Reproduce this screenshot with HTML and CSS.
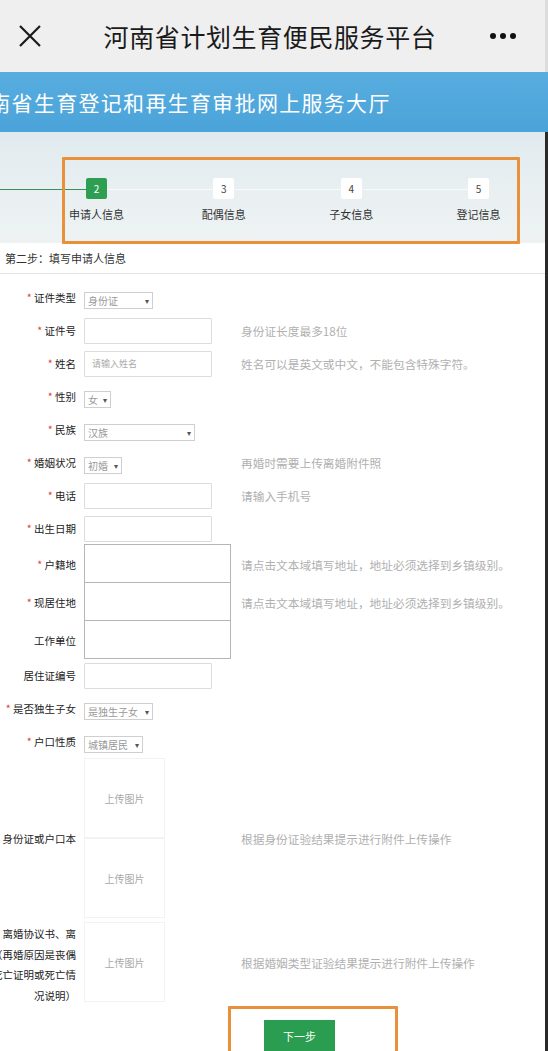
FILE: index.html
```html
<!DOCTYPE html>
<html lang="zh-CN">
<head>
<meta charset="utf-8">
<title>河南省计划生育便民服务平台</title>
<link rel="stylesheet" href="styles.css">
</head>
<body>
<header class="topbar">
  <svg class="close" width="24" height="24" viewBox="0 0 24 24"><path d="M2 2 L22 22 M22 2 L2 22" stroke="#1a1a1a" stroke-width="2.2" fill="none"/></svg>
  <h1>河南省计划生育便民服务平台</h1>
  <span class="more"><i></i><i></i><i></i></span>
</header>
<div class="banner"><span>河南省生育登记和再生育审批网上服务大厅</span></div>
<div class="steps-area">
  <div class="track">
    <div class="line done"></div>
    <div class="step active"><b>2</b><span>申请人信息</span></div>
    <div class="line"></div>
    <div class="step"><b>3</b><span>配偶信息</span></div>
    <div class="line"></div>
    <div class="step"><b>4</b><span>子女信息</span></div>
    <div class="line"></div>
    <div class="step"><b>5</b><span>登记信息</span></div>
  </div>
  <div class="mark mark-steps"></div>
</div>
<main class="content">
  <div class="section-title">第二步：填写申请人信息</div>
  <div class="form">
    <div class="row"><label class="req">证件类型</label><div><span class="select w69">身份证</span></div><span class="hint"></span></div>
    <div class="row"><label class="req">证件号</label><div><span class="input"></span></div><span class="hint">身份证长度最多18位</span></div>
    <div class="row"><label class="req">姓名</label><div><span class="input ph">请输入姓名</span></div><span class="hint">姓名可以是英文或中文，不能包含特殊字符。</span></div>
    <div class="row"><label class="req">性别</label><div><span class="select w27">女</span></div><span class="hint"></span></div>
    <div class="row"><label class="req">民族</label><div><span class="select w111">汉族</span></div><span class="hint"></span></div>
    <div class="row"><label class="req">婚姻状况</label><div><span class="select w38">初婚</span></div><span class="hint">再婚时需要上传离婚附件照</span></div>
    <div class="row"><label class="req">电话</label><div><span class="input"></span></div><span class="hint">请输入手机号</span></div>
    <div class="row"><label class="req">出生日期</label><div><span class="input"></span></div><span class="hint"></span></div>
    <div class="row tall"><label class="req">户籍地</label><div class="area"></div><span class="hint">请点击文本域填写地址，地址必须选择到乡镇级别。</span></div>
    <div class="row tall"><label class="req">现居住地</label><div class="area"></div><span class="hint">请点击文本域填写地址，地址必须选择到乡镇级别。</span></div>
    <div class="row tall"><label>工作单位</label><div class="area"></div><span class="hint"></span></div>
    <div class="row"><label>居住证编号</label><div><span class="input"></span></div><span class="hint"></span></div>
    <div class="row"><label class="req">是否独生子女</label><div><span class="select w69">是独生子女</span></div><span class="hint"></span></div>
    <div class="row"><label class="req">户口性质</label><div><span class="select w59">城镇居民</span></div><span class="hint"></span></div>
    <div class="upload-row">
      <label>身份证或户口本</label>
      <div class="boxes"><div class="upbox">上传图片</div><div class="upbox">上传图片</div></div>
      <span class="uphint">根据身份证验结果提示进行附件上传操作</span>
    </div>
    <div class="upload-row">
      <label class="multi">离婚协议书、离<br>（再婚原因是丧偶<br>死亡证明或死亡情<br>况说明）</label>
      <div class="boxes"><div class="upbox">上传图片</div></div>
      <span class="uphint">根据婚姻类型证验结果提示进行附件上传操作</span>
    </div>
  </div>
  <div class="actions">
    <button class="next">下一步</button>
    <div class="mark mark-btn"></div>
  </div>
</main>
</body>
</html>
```
FILE: styles.css
```css
* { box-sizing: border-box; }
html, body { margin: 0; padding: 0; }
body {
  width: 548px;
  height: 1051px;
  overflow: hidden;
  background: #fff;
  font-family: "Noto Sans CJK SC", "Noto Sans", sans-serif;
  color: #222;
}

.topbar {
  height: 72px;
  background: #efefef;
  display: grid;
  grid-template-columns: 1fr auto 1fr;
  align-items: center;
  padding: 0 25px 0 20px;
  border-right: 3px solid #dcdcdc;
}
.close { display: block; margin-left: -2px; }
.topbar h1 {
  margin: 0;
  font-size: 25px;
  font-weight: 400;
  letter-spacing: 0.6px;
  color: #1a1a1a;
}
.more { justify-self: end; display: flex; gap: 4px; margin-right: 4px; }
.more i { width: 6px; height: 6px; border-radius: 50%; background: #111; display: block; }

.banner {
  height: 60px;
  background: linear-gradient(#58addf, #4aa3d9);
  color: #fff;
  display: flex;
  align-items: center;
  overflow: hidden;
  white-space: nowrap;
}
.banner span {
  margin-left: -33px;
  font-size: 21px;
  letter-spacing: 1.3px;
}

.steps-area {
  position: relative;
  height: 111px;
  padding-top: 46px;
  background: linear-gradient(#e0eaee, #eaf0f2 60%, #eef2f3);
  border-right: 3px solid #2a2a2a;
}
.track {
  display: flex;
  align-items: flex-start;
  padding-right: 56px;
}
.line { flex: 1; height: 1px; margin-top: 11px; background: #f7f9fa; }
.line.done { flex: 0 0 86px; background: #3a8f5a; }
.step {
  width: 21px;
  display: flex;
  flex-direction: column;
  align-items: center;
}
.step b {
  width: 21px; height: 21px;
  border-radius: 2px;
  background: #fff;
  font-weight: 400;
  font-size: 10px;
  line-height: 21px;
  text-align: center;
  color: #444;
}
.step.active b { background: #2e9f52; color: #fff; }
.step span {
  white-space: nowrap;
  font-size: 11px;
  color: #333;
  margin-top: 7px;
}

.mark {
  position: absolute;
  border: 3px solid #e8913a;
  border-radius: 1px;
}
.mark-steps { left: 62px; top: 25px; width: 458px; height: 87px; }

.content {
  border-right: 3px solid #2a2a2a;
  height: 808px;
}
.section-title {
  height: 31px;
  line-height: 31px;
  padding-left: 5px;
  font-size: 11px;
  color: #333;
  border-bottom: 1px solid #e4e4e4;
}
.form { padding-top: 7px; }
.row {
  display: grid;
  grid-template-columns: 76px 147px 1fr;
  column-gap: 8px;
  align-items: center;
  height: 33px;
}
.row.tall { height: 38px; align-items: stretch; }
.row.tall label, .row.tall .hint { align-self: center; }
label {
  font-size: 10.5px;
  text-align: right;
  white-space: nowrap;
  color: #222;
}
label.req::before { content: "* "; color: #d9443a; }
.hint {
  font-size: 11.7px;
  color: #b0b0b0;
  padding-left: 2px;
  white-space: nowrap;
}
.select {
  display: inline-flex;
  align-items: center;
  justify-content: space-between;
  white-space: nowrap;
  height: 17px;
  padding: 0 3px;
  border: 1px solid #cfcfcf;
  font-size: 10px;
  color: #999;
  vertical-align: middle;
}
.select::after { content: "▾"; font-size: 8px; color: #555; margin-left: 2px; }
.w27 { width: 27px; }
.w38 { width: 38px; }
.w59 { width: 59px; }
.w69 { width: 69px; }
.w111 { width: 111px; }
.input {
  display: block;
  width: 128px;
  height: 26px;
  border: 1px solid #dcdcdc;
  border-radius: 1px;
}
.input.ph {
  font-size: 9px;
  color: #aaa;
  line-height: 24px;
  padding-left: 7px;
}
.area {
  border: 1px solid #b5b5b5;
  margin-top: -1px;
}

.upload-row {
  display: grid;
  grid-template-columns: 76px 81px 1fr;
  column-gap: 8px;
  align-items: center;
}
.boxes { display: flex; flex-direction: column; }
.upbox {
  height: 80px;
  border: 1px solid #f2f2f2;
  display: flex;
  align-items: center;
  justify-content: center;
  font-size: 10px;
  color: #a8a8a8;
}
.uphint {
  font-size: 11.7px;
  color: #b0b0b0;
  padding-left: 68px;
  white-space: nowrap;
}
label.multi {
  width: 90px;
  margin-left: -14px;
  margin-top: 6px;
  line-height: 20.5px;
}

.actions {
  position: relative;
  height: 50px;
  padding: 14px 0 0 264px;
}
.next {
  display: block;
  width: 71px;
  height: 32px;
  border: 0;
  background: #2b9d50;
  color: #fff;
  font-family: inherit;
  font-size: 11px;
  padding: 0;
}
.mark-btn { left: 228px; top: 0; width: 170px; height: 56px; }
```
